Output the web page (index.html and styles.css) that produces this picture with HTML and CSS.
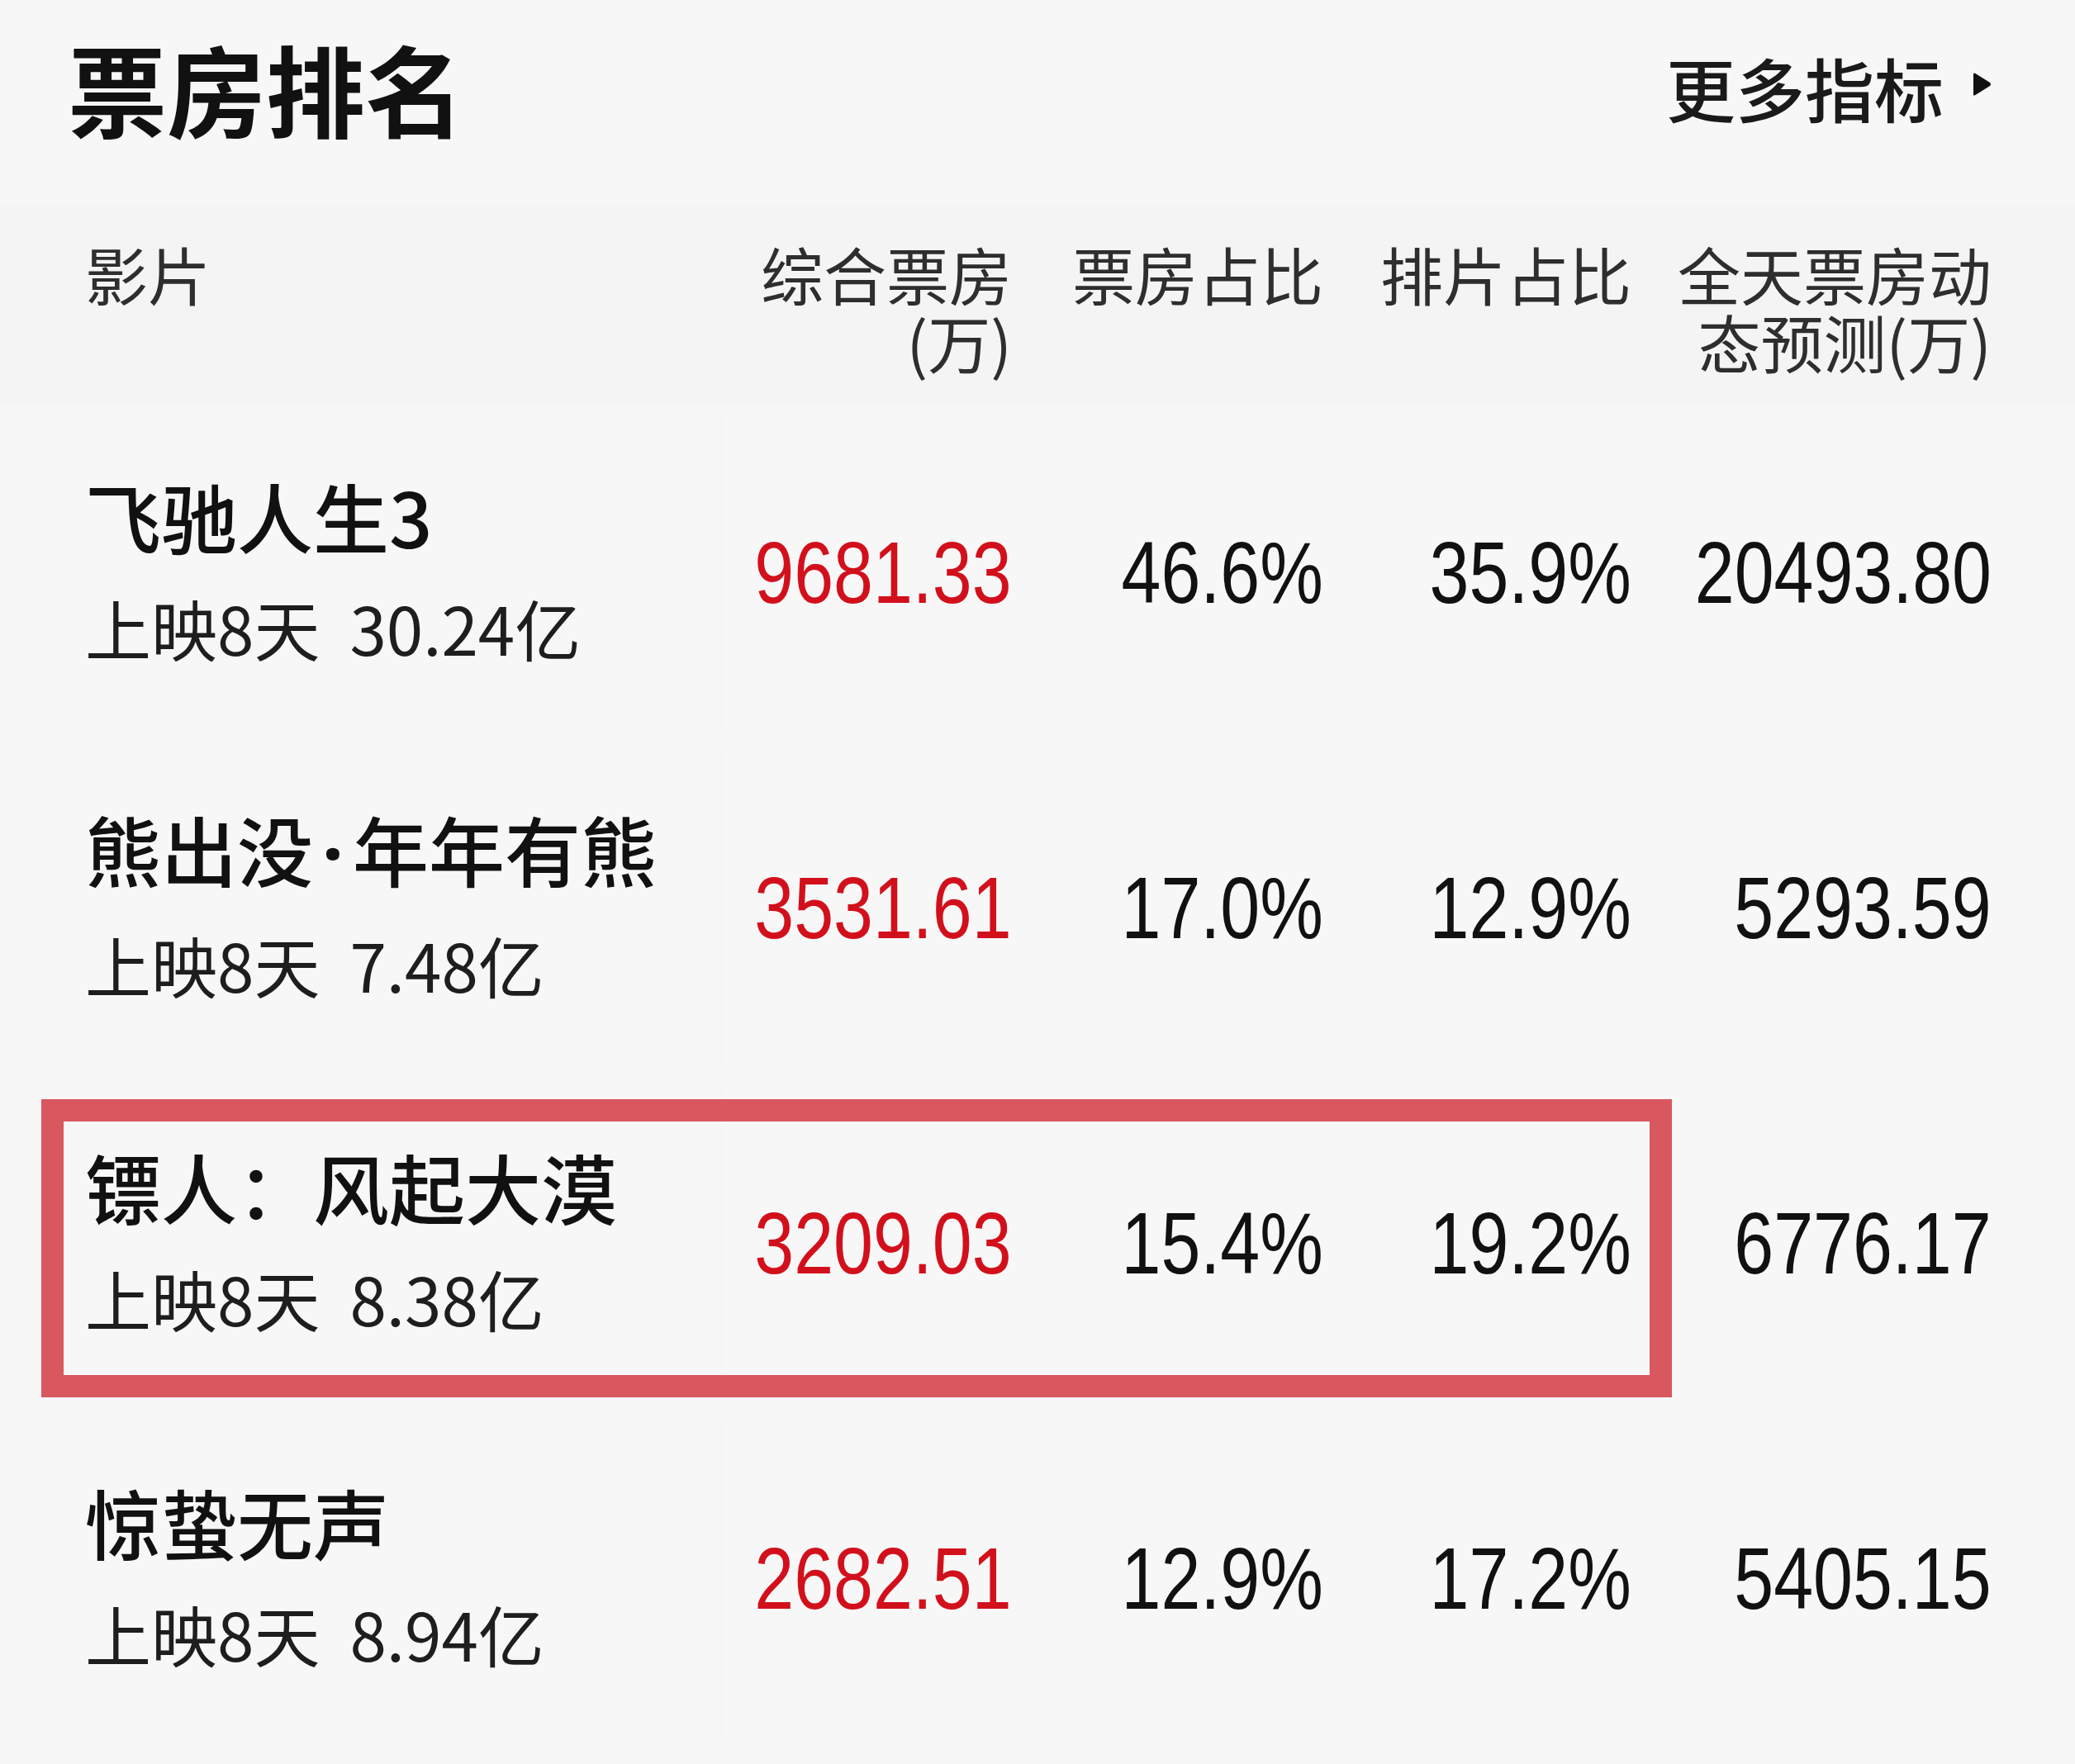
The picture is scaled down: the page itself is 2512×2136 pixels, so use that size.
FILE: index.html
```html
<!DOCTYPE html>
<html lang="zh-CN">
<head>
<meta charset="utf-8">
<title>票房排名</title>
<link rel="stylesheet" href="styles.css">
</head>
<body>
<div class="page">
  <div class="topbar">
    <h1 class="title">票房排名</h1>
    <div class="more">更多指标<svg class="tri" width="24" height="30" viewBox="0 0 24 30"><path d="M2 3 Q2 0.5 4.5 2 L22 13 Q24 15 22 17 L4.5 28 Q2 29.5 2 27 Z" fill="#111"/></svg></div>
  </div>

  <div class="table">
    <div class="grid thead">
      <div class="cell name-col">影片</div>
      <div class="cell num">综合票房<br>(万)</div>
      <div class="cell num">票房占比</div>
      <div class="cell num">排片占比</div>
      <div class="cell num">全天票房动<br>态预测(万)</div>
    </div>

    <div class="grid trow">
      <div class="cell name-col">
        <div class="movie">飞驰人生3</div>
        <div class="meta">上映8天<span class="total">30.24亿</span></div>
      </div>
      <div class="cell val red"><span class="digits">9681.33</span></div>
      <div class="cell val"><span class="digits">46.6%</span></div>
      <div class="cell val"><span class="digits">35.9%</span></div>
      <div class="cell val"><span class="digits">20493.80</span></div>
    </div>

    <div class="grid trow">
      <div class="cell name-col">
        <div class="movie">熊出没<span class="dot">·</span>年年有熊</div>
        <div class="meta">上映8天<span class="total">7.48亿</span></div>
      </div>
      <div class="cell val red"><span class="digits">3531.61</span></div>
      <div class="cell val"><span class="digits">17.0%</span></div>
      <div class="cell val"><span class="digits">12.9%</span></div>
      <div class="cell val"><span class="digits">5293.59</span></div>
    </div>

    <div class="grid trow highlight">
      <div class="cell name-col">
        <div class="movie">镖人：风起大漠</div>
        <div class="meta">上映8天<span class="total">8.38亿</span></div>
      </div>
      <div class="cell val red"><span class="digits">3209.03</span></div>
      <div class="cell val"><span class="digits">15.4%</span></div>
      <div class="cell val"><span class="digits">19.2%</span></div>
      <div class="cell val"><span class="digits">6776.17</span></div>
      <div class="mark"></div>
    </div>

    <div class="grid trow">
      <div class="cell name-col">
        <div class="movie">惊蛰无声</div>
        <div class="meta">上映8天<span class="total">8.94亿</span></div>
      </div>
      <div class="cell val red"><span class="digits">2682.51</span></div>
      <div class="cell val"><span class="digits">12.9%</span></div>
      <div class="cell val"><span class="digits">17.2%</span></div>
      <div class="cell val"><span class="digits">5405.15</span></div>
    </div>
  </div>
</div>
</body>
</html>
```

FILE: styles.css
```css
html, body {
  margin: 0;
  padding: 0;
  background: #f7f7f7;
}

body {
  font-family: "Noto Sans CJK SC", "Noto Sans", sans-serif;
  color: #111;
}

.page {
  width: 2512px;
  min-height: 2136px;
  background: #f7f7f7;
}

.topbar {
  box-sizing: border-box;
  height: 248px;
  padding: 0 101px 36px 82px;
  display: flex;
  align-items: center;
  justify-content: space-between;
}

.title {
  margin: 0;
  font-size: 120px;
  line-height: 140px;
  font-weight: 700;
  color: #111;
}

.more {
  display: flex;
  align-items: center;
  font-size: 84px;
  line-height: 100px;
  font-weight: 500;
  color: #1a1a1a;
}

.tri {
  margin-left: 34px;
  margin-top: -8px;
}

.grid {
  display: grid;
  grid-template-columns: 873px 352px 377px 373px 436px;
  padding-right: 101px;
}

.thead {
  box-sizing: border-box;
  height: 242px;
  background: #f4f4f4;
  align-items: start;
  font-size: 76px;
  line-height: 82px;
  color: #2e2e2e;
}

.thead .cell {
  padding-top: 42px;
}

.name-col {
  box-sizing: border-box;
  padding-left: 103px;
}

.num {
  text-align: right;
}

.trow {
  height: 406px;
  align-items: center;
}

.trow .name-col {
  height: 100%;
  padding-bottom: 10px;
  display: flex;
  flex-direction: column;
  justify-content: center;
  gap: 33px;
  box-shadow: 5px 0 8px -6px rgba(0, 0, 0, 0.025);
}

.movie {
  font-size: 92px;
  line-height: 108px;
  font-weight: 500;
  color: #111;
  white-space: nowrap;
}

.dot {
  font-family: "Noto Sans", "DejaVu Sans", sans-serif;
  font-weight: 700;
  margin: 0 0.12em;
}

.meta {
  font-size: 80px;
  line-height: 96px;
  color: #1e1e1e;
  white-space: nowrap;
}

.total {
  margin-left: 36px;
}

.val {
  display: flex;
  justify-content: flex-end;
  font-family: "Liberation Sans", "Roboto", sans-serif;
  font-size: 105px;
  line-height: 1;
  color: #111;
}

.digits {
  display: block;
  white-space: nowrap;
  transform: scaleX(0.82);
  transform-origin: right center;
}

.red {
  color: #d2101c;
}

.highlight {
  position: relative;
}

.mark {
  position: absolute;
  left: 50px;
  top: 29px;
  width: 1974px;
  height: 361px;
  box-sizing: border-box;
  border: 27px solid #d9575f;
  pointer-events: none;
}
```
